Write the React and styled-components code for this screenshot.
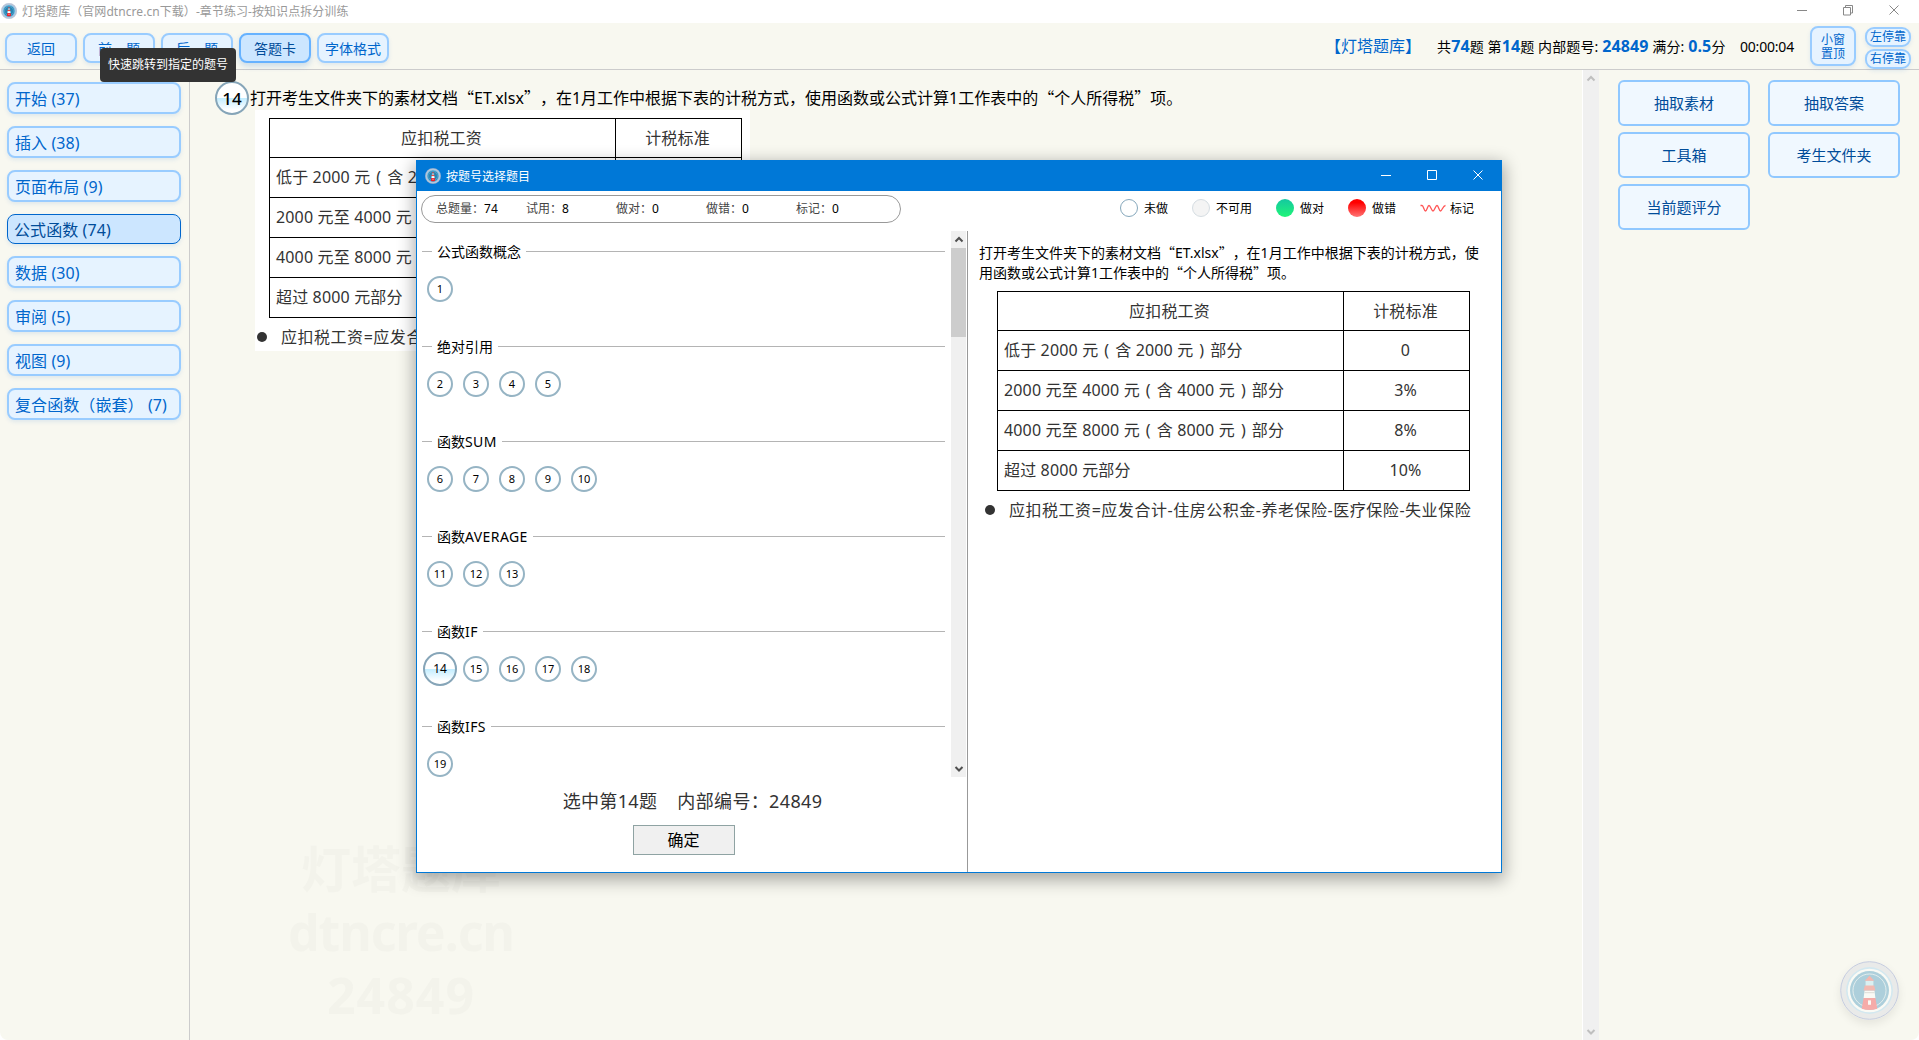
import styled, { createGlobalStyle, css } from "styled-components";

// === Data ===
const chapters = [
  { name: "开始", count: 37 },
  { name: "插入", count: 38 },
  { name: "页面布局", count: 9 },
  { name: "公式函数", count: 74, active: true },
  { name: "数据", count: 30 },
  { name: "审阅", count: 5 },
  { name: "视图", count: 9 },
  { name: "复合函数（嵌套）", count: 7 },
];

const groups = [
  { title: "公式函数概念", items: [1] },
  { title: "绝对引用", items: [2, 3, 4, 5] },
  { title: "函数", latin: "SUM", items: [6, 7, 8, 9, 10] },
  { title: "函数", latin: "AVERAGE", items: [11, 12, 13] },
  { title: "函数", latin: "IF", items: [14, 15, 16, 17, 18] },
  { title: "函数", latin: "IFS", items: [19] },
];

const stats = [
  ["总题量", 74],
  ["试用", 8],
  ["做对", 0],
  ["做错", 0],
  ["标记", 0],
];

const taxRows = [
  ["低于 2000 元 ( 含 2000 元 ) 部分", "0"],
  ["2000 元至 4000 元 ( 含 4000 元 ) 部分", "3%"],
  ["4000 元至 8000 元 ( 含 8000 元 ) 部分", "8%"],
  ["超过 8000 元部分", "10%"],
];

const actions = ["抽取素材", "抽取答案", "工具箱", "考生文件夹", "当前题评分"];

const CURRENT = 14;

// === Styled Components ===
const GlobalStyle = createGlobalStyle`
  * {
    box-sizing: border-box;
  }

  body {
    margin: 0;
    background: #fff;
    overflow: hidden;
    font-family: "Noto Sans", "Noto Sans CJK SC", sans-serif;
    font-size: 14px;
    color: #000;
    text-spacing-trim: space-all;
  }

  button {
    font-family: inherit;
    cursor: pointer;
  }
`;

const Window = styled.div`
  width: 1919px;
  height: 1040px;
  display: flex;
  flex-direction: column;
  background: #f8f8f0;
  border-radius: 0 0 8px 8px;
  overflow: hidden;
`;

const TitleBar = styled.header`
  height: 23px;
  flex: none;
  display: flex;
  align-items: center;
  padding: 0 19px 1px 1px;
  background: #fff;
  color: #999;
  font-size: 12px;
  letter-spacing: 0.06px;
`;

const TitleText = styled.span`
  flex: 1;
  margin-left: 5px;
`;

const Controls = styled.div`
  display: flex;
  gap: 34px;
  padding-bottom: 2px;
  color: ${({ $color }) => $color};
`;

const Toolbar = styled.div`
  height: 47px;
  flex: none;
  display: flex;
  align-items: center;
  justify-content: space-between;
  padding: 0 8px 0 5px;
  border-bottom: 1px solid #ccc;
`;

const ButtonRow = styled.div`
  display: flex;
  gap: 6px;
  padding-top: 4px;
`;

const blueButton = css`
  border: 2px solid #99ccff;
  background: #e6f3ff;
  color: #0066cc;
  box-shadow: 0 2px 4px rgba(0, 102, 204, 0.1);
`;

const ToolButton = styled.button`
  ${blueButton}
  width: 72px;
  height: 30px;
  padding: 2px 0 0;
  border-radius: 8px;
  font-size: 14px;
  line-height: 24px;
  ${({ $active }) =>
    $active &&
    css`
      border-color: #66b2ff;
      background: #cce6ff;
      color: #004c99;
      box-shadow: 0 3px 6px rgba(0, 102, 204, 0.2);
    `}
`;

const StatusArea = styled.div`
  display: flex;
  align-items: center;
`;

const Brand = styled.span`
  font-size: 16px;
  line-height: 24px;
  color: #0066cc;
  margin-right: 16px;
`;

const Status = styled.span`
  width: 287px;
  margin-right: 16px;
  letter-spacing: 0.12px;
  white-space: nowrap;

  b {
    font-size: 16px;
    color: #0066cc;
  }
`;

const Timer = styled.span`
  width: 70px;
  letter-spacing: -0.2px;
`;

const PinButton = styled.button`
  ${blueButton}
  width: 46px;
  height: 40px;
  padding: 1px 0 0;
  border-radius: 8px;
  font-size: 12px;
  line-height: 14px;
`;

const DockColumn = styled.div`
  display: flex;
  flex-direction: column;
  gap: 2px;
  margin: 3px 0 0 9px;
`;

const DockButton = styled.button`
  ${blueButton}
  width: 46px;
  height: 20px;
  padding: 1px 0 0;
  border-radius: 9px;
  font-size: 12px;
  line-height: 14px;
`;

const Body = styled.div`
  flex: 1;
  min-height: 0;
  display: flex;
`;

const Sidebar = styled.nav`
  width: 190px;
  flex: none;
  display: flex;
  flex-direction: column;
  gap: 12px;
  padding: 12px 8px 0 7px;
  border-right: 1px solid #ccc;
`;

const ChapterButton = styled.button`
  ${blueButton}
  width: 174px;
  height: 32px;
  flex: none;
  padding: 2px 0 0 6px;
  border-radius: 8px;
  font-size: 16px;
  line-height: 26px;
  letter-spacing: 0.08px;
  text-align: left;
  white-space: nowrap;
  ${({ $active }) =>
    $active &&
    css`
      height: 30px;
      border: 1px solid #0066cc;
      background: #cce6ff;
      color: #004c99;
    `}
`;

const Content = styled.main`
  width: 1393px;
  flex: none;
  padding: 11px 0 0 25px;
  border-right: 1px solid #fff;
`;

const QuestionLine = styled.div`
  height: 29px;
  display: flex;
  align-items: flex-start;
  gap: 1px;
  font-size: 16px;
  line-height: 35px;
  white-space: nowrap;
`;

// Curly quotes take a full em only in the CJK face
const Quote = styled.span`
  font-family: "Noto Sans CJK SC", sans-serif;
  line-height: 0;
`;

const SheetWrap = styled.div`
  margin-left: 40px;
`;

const Scrollbar = styled.div`
  width: ${({ $width }) => $width}px;
  height: ${({ $height }) => $height};
  flex: none;
  display: flex;
  flex-direction: column;
  align-items: center;
  justify-content: space-between;
  background: #f0f0f0;
`;

const ScrollThumb = styled.div`
  width: 100%;
  height: 89px;
  margin-bottom: auto;
  background: #cdcdcd;
`;

const ActionPanel = styled.aside`
  display: grid;
  grid-template-columns: 132px 132px;
  grid-auto-rows: 46px;
  gap: 6px 18px;
  padding: 10px 0 0 19px;
`;

const ActionButton = styled.button`
  padding: 0 0 2px;
  border: 2px solid #90c8ff;
  border-radius: 6px;
  background: #f0f8ff;
  color: #004c99;
  font-size: 15px;
`;

const Bubble = styled.button`
  width: ${({ $size }) => $size}px;
  height: ${({ $size }) => $size}px;
  flex: none;
  padding: 0 0 ${({ $selected }) => ($selected ? 0 : 2)}px;
  border: 2px solid #96b4c4;
  border-radius: 50%;
  background: #fff;
  color: #000;
  font-size: ${({ $font }) => $font}px;
  font-weight: ${({ $bold }) => ($bold ? 500 : 400)};
  line-height: 1;
  text-align: center;
  ${({ $selected }) =>
    $selected &&
    css`
      border-color: #86a5b8;
      background: linear-gradient(#fff 50%, #c2edff 50%, #fff 90%);
    `}
`;

const SheetBox = styled.div`
  width: 495px;
  height: 241px;
  padding: 8px 0 0 14px;
  background: #fff;
  color: #333;
  font-size: 16px;
`;

const SheetTable = styled.table`
  width: 473px;
  border-collapse: collapse;
  table-layout: fixed;

  th,
  td {
    height: 40px;
    padding: 0 0 1px 6px;
    border: 1px solid #000;
    font-weight: 400;
    line-height: 22px;
    letter-spacing: 0.15px;
    text-align: left;
    white-space: nowrap;
  }

  th {
    height: 39px;
    padding: 0 2px 1px 0;
    text-align: center;
  }

  td:last-child {
    padding: 0 2px 1px 0;
    text-align: center;
  }
`;

const Paren = styled.span`
  margin: 0 1.7px;
`;

const Note = styled.p`
  display: flex;
  align-items: center;
  gap: 14px;
  margin: 6px 0 0 -12px;
  line-height: 26px;
  letter-spacing: 0.53px;
  white-space: nowrap;

  &::before {
    content: "";
    width: 10px;
    height: 10px;
    flex: none;
    border-radius: 50%;
    background: #333;
  }
`;

const Tooltip = styled.div`
  position: absolute;
  left: 100px;
  top: 48px;
  width: 136px;
  height: 34px;
  border-radius: 4px;
  background: #333;
  color: #fff;
  font-size: 12px;
  line-height: 34px;
  text-align: center;
`;

const Watermark = styled.div`
  position: absolute;
  left: 270px;
  top: 838px;
  width: 262px;
  color: #f3f3eb;
  font-size: 50px;
  font-weight: 700;
  line-height: 63px;
  text-align: center;
  white-space: nowrap;
`;

const WatermarkLine = styled.div`
  letter-spacing: ${({ $track }) => $track}px;
`;

const FloatingLogo = styled.div`
  position: absolute;
  left: 1840px;
  top: 961px;
  width: 59px;
  height: 59px;
  border-radius: 50%;
  box-shadow: 0 4px 10px rgba(0, 0, 0, 0.08);
`;

const Dialog = styled.section`
  position: absolute;
  left: 416px;
  top: 160px;
  width: 1086px;
  height: 713px;
  display: flex;
  flex-direction: column;
  border: 1px solid #0078d7;
  background: #fff;
  box-shadow: 0 5px 16px 2px rgba(0, 0, 0, 0.33);
`;

const DialogTitle = styled.header`
  height: 30px;
  flex: none;
  display: flex;
  align-items: center;
  padding: 0 17px 1px 8px;
  background: #0078d7;
  color: #fff;
  font-size: 12px;
`;

const Summary = styled.div`
  height: 40px;
  flex: none;
  display: flex;
  justify-content: space-between;
  padding: 4px 27px 0 4px;
  font-size: 12px;
`;

const StatPill = styled.div`
  width: 480px;
  height: 28px;
  display: flex;
  padding-left: 14px;
  border: 1px solid #999;
  border-radius: 14px;
  line-height: 26px;
`;

const Stat = styled.span`
  width: 90px;
  color: #444;

  b {
    color: #000;
    font-weight: 400;
  }
`;

const Legend = styled.div`
  display: flex;
  gap: 24px;
  height: 26px;
`;

const LegendItem = styled.span`
  display: flex;
  align-items: center;
  gap: ${({ $gap = 6 }) => $gap}px;
`;

const Dot = styled.i`
  width: 18px;
  height: 18px;
  border-radius: 50%;
  border: ${({ $border }) => ($border ? `1px solid ${$border}` : "none")};
  background: ${({ $fill }) => $fill};
`;

const DialogBody = styled.div`
  flex: 1;
  min-height: 0;
  display: flex;
`;

const Picker = styled.div`
  width: 551px;
  flex: none;
  display: flex;
  flex-direction: column;
  border-right: 1px solid #999;
`;

const GroupScroll = styled.div`
  height: 546px;
  display: flex;
  padding-right: 1px;
  overflow: hidden;
`;

const GroupList = styled.div`
  flex: 1;
  padding: 10px 6px 0 5px;
`;

const Group = styled.div`
  height: 95px;
`;

const GroupTitle = styled.div`
  display: flex;
  align-items: center;
  gap: 5px;
  height: 20px;
  line-height: 20px;

  &::before,
  &::after {
    content: "";
    height: 1px;
    background: #b4b4b4;
  }

  &::before {
    width: 10px;
  }

  &::after {
    flex: 1;
  }
`;

const GroupName = styled.span`
  padding-top: 1px;
`;

const Latin = styled.span`
  letter-spacing: 0.4px;
`;

const BubbleRow = styled.div`
  display: flex;
  align-items: center;
  height: 56px;
`;

const BubbleCell = styled.div`
  width: 36px;
  display: flex;
  justify-content: center;
`;

const PickerFooter = styled.div`
  display: flex;
  flex-direction: column;
  align-items: center;
  padding: 10px 0 0 1px;
`;

const Selected = styled.div`
  display: flex;
  gap: 20px;
  color: #333;
  font-size: 18px;
  line-height: 28px;
  letter-spacing: 0.35px;
`;

const ConfirmButton = styled.button`
  width: 102px;
  height: 30px;
  margin: 10px 18px 0 0;
  padding: 0;
  border: 1px solid #8fa3a3;
  background: #f0f0f0;
  color: #000;
  font-size: 16px;
  line-height: 26px;
`;

const Preview = styled.div`
  padding: 12px 0 0 11px;
`;

const PreviewText = styled.p`
  width: 506px;
  margin: 0;
  font-size: 14px;
  line-height: 20px;
`;

const PreviewSheet = styled.div`
  margin-left: 4px;
`;

// === Icons ===
function LogoIcon({ size = 16, soft }) {
  return (
    <svg width={size} height={size} viewBox="0 0 60 60">
      <g opacity={soft ? 0.35 : 1}>
        <circle
          cx="30"
          cy="30"
          r="29.300"
          fill={soft ? "#cfd2de" : "#b9c6d8"}
          stroke={soft ? "#6478c0" : "#8fa3c8"}
          strokeWidth="1"
        />
        <circle cx="30" cy="30" r="23.800" fill="#8fcdf0" />
        <circle cx="30" cy="30" r="22.200" fill={soft ? "#fff" : "#6fb2d8"} />
        <circle cx="30" cy="30" r="19.800" fill="#2385b5" />
        <circle
          cx="30"
          cy="30"
          r="16.800"
          fill="none"
          stroke="#fff"
          strokeWidth="1"
          opacity="0.7"
        />
        <path d="M25 30h10l1 8H24z" fill="#fff" />
        <path d="M24 37.500h12l1.900 11q-7.900 2.500-15.800 0z" fill="#f02028" />
        <path d="M26 20h8v6h-8z" fill="#a8e4f4" />
        <path d="M30 15l4.800 5h-9.600z" fill="#f04038" />
        <path d="M25.200 25h9.600l1.200 5H24z" fill="#e84840" />
        <path d="M25 32.200h10" stroke="#888" strokeWidth="0.700" />
        <path d="M28.500 40h3v4.500h-3z" fill="#fff" />
      </g>
    </svg>
  );
}

function WindowIcon({ kind }) {
  const paths = {
    min: "M1 6.500h10",
    max: "M1.500 1.500h9v9h-9z",
    restore: "M1.500 3.500h7v7.500h-7zM3.500 3.500v-2h7v7.500h-2",
    close: "M1.500 1.500l9 9M10.500 1.500l-9 9",
  };

  return (
    <svg width="12" height="12" viewBox="0 0 12 12" fill="none">
      <path d={paths[kind]} stroke="currentColor" />
    </svg>
  );
}

function Chevron({ down, color = "#505050" }) {
  return (
    <svg width="16" height="17" viewBox="0 0 16 17" fill="none">
      <path
        d={down ? "M4.500 7l3.500 3.500L11.500 7" : "M4.500 10.500L8 7l3.500 3.500"}
        stroke={color}
        strokeWidth="2"
      />
    </svg>
  );
}

function WaveIcon() {
  return (
    <svg width="26" height="10" viewBox="0 0 26 10" fill="none">
      <path
        d="M0.500 2.500H2C3.500 2.500 4 8 5.500 8S7.500 2.500 9 2.500 11.500 8 13 8s2.500-5.500 4-5.500S19 8 20.500 8 23 2.500 25.500 2.500"
        stroke="#f55"
        strokeWidth="1.300"
      />
    </svg>
  );
}

// === Parts ===
function QuestionText() {
  return (
    <span>
      打开考生文件夹下的素材文档<Quote>“</Quote>ET.xlsx<Quote>”</Quote>
      ，在1月工作中根据下表的计税方式，使用函数或公式计算1工作表中的
      <Quote>“</Quote>个人所得税<Quote>”</Quote>项。
    </span>
  );
}

function TaxRange({ text }) {
  return text
    .split(/([()])/)
    .map((part, i) =>
      part === "(" || part === ")" ? <Paren key={i}>{part}</Paren> : part
    );
}

function TaxSheet() {
  return (
    <SheetBox>
      <SheetTable>
        <colgroup>
          <col width="346" />
          <col width="126" />
        </colgroup>
        <thead>
          <tr>
            <th>应扣税工资</th>
            <th>计税标准</th>
          </tr>
        </thead>
        <tbody>
          {taxRows.map(([range, rate]) => (
            <tr key={range}>
              <td>
                <TaxRange text={range} />
              </td>
              <td>{rate}</td>
            </tr>
          ))}
        </tbody>
      </SheetTable>
      <Note>应扣税工资=应发合计-住房公积金-养老保险-医疗保险-失业保险</Note>
    </SheetBox>
  );
}

function AnswerCardDialog() {
  return (
    <Dialog>
      <DialogTitle>
        <LogoIcon />
        <TitleText>按题号选择题目</TitleText>
        <Controls $color="#fff">
          <WindowIcon kind="min" />
          <WindowIcon kind="max" />
          <WindowIcon kind="close" />
        </Controls>
      </DialogTitle>

      <Summary>
        <StatPill>
          {stats.map(([label, value]) => (
            <Stat key={label}>
              {label}：<b>{value}</b>
            </Stat>
          ))}
        </StatPill>
        <Legend>
          <LegendItem>
            <Dot $fill="#fff" $border="#86a8bc" />
            未做
          </LegendItem>
          <LegendItem>
            <Dot $fill="#f4f4f4" $border="#d5dde2" />
            不可用
          </LegendItem>
          <LegendItem>
            <Dot $fill="linear-gradient(#14c8a0, #20f578)" />
            做对
          </LegendItem>
          <LegendItem>
            <Dot $fill="linear-gradient(#ff0000 20%, #ff7474)" />
            做错
          </LegendItem>
          <LegendItem $gap={4}>
            <WaveIcon />
            标记
          </LegendItem>
        </Legend>
      </Summary>

      <DialogBody>
        <Picker>
          <GroupScroll>
            <GroupList>
              {groups.map(({ title, latin, items }) => (
                <Group key={items[0]}>
                  <GroupTitle>
                    <GroupName>
                      {title}
                      {latin && <Latin>{latin}</Latin>}
                    </GroupName>
                  </GroupTitle>
                  <BubbleRow>
                    {items.map((n) => (
                      <BubbleCell key={n}>
                        <Bubble
                          $size={n === CURRENT ? 34 : 26}
                          $font={n === CURRENT ? 12 : 11}
                          $selected={n === CURRENT}
                        >
                          {n}
                        </Bubble>
                      </BubbleCell>
                    ))}
                  </BubbleRow>
                </Group>
              ))}
            </GroupList>
            <Scrollbar $width={15} $height="546px">
              <Chevron />
              <ScrollThumb />
              <Chevron down />
            </Scrollbar>
          </GroupScroll>
          <PickerFooter>
            <Selected>
              <span>选中第{CURRENT}题</span>
              <span>内部编号：24849</span>
            </Selected>
            <ConfirmButton>确定</ConfirmButton>
          </PickerFooter>
        </Picker>

        <Preview>
          <PreviewText>
            <QuestionText />
          </PreviewText>
          <PreviewSheet>
            <TaxSheet />
          </PreviewSheet>
        </Preview>
      </DialogBody>
    </Dialog>
  );
}

// === Main Component ===
export default function App() {
  return (
    <>
      <GlobalStyle />
      <Window>
        <TitleBar>
          <LogoIcon />
          <TitleText>
            灯塔题库（官网dtncre.cn下载）-章节练习-按知识点拆分训练
          </TitleText>
          <Controls $color="#888">
            <WindowIcon kind="min" />
            <WindowIcon kind="restore" />
            <WindowIcon kind="close" />
          </Controls>
        </TitleBar>

        <Toolbar>
          <ButtonRow>
            <ToolButton>返回</ToolButton>
            <ToolButton>前一题</ToolButton>
            <ToolButton>后一题</ToolButton>
            <ToolButton $active>答题卡</ToolButton>
            <ToolButton>字体格式</ToolButton>
          </ButtonRow>
          <StatusArea>
            <Brand>【灯塔题库】</Brand>
            <Status>
              共<b>74</b>题 第<b>14</b>题 内部题号: <b>24849</b> 满分: <b>0.5</b>分
            </Status>
            <Timer>00:00:04</Timer>
            <PinButton>
              小窗
              <br />
              置顶
            </PinButton>
            <DockColumn>
              <DockButton>左停靠</DockButton>
              <DockButton>右停靠</DockButton>
            </DockColumn>
          </StatusArea>
        </Toolbar>

        <Body>
          <Sidebar>
            {chapters.map(({ name, count, active }) => (
              <ChapterButton key={name} $active={active}>
                {name} ({count})
              </ChapterButton>
            ))}
          </Sidebar>
          <Content>
            <QuestionLine>
              <Bubble $size={34} $font={17} $selected $bold>
                14
              </Bubble>
              <QuestionText />
            </QuestionLine>
            <SheetWrap>
              <TaxSheet />
            </SheetWrap>
          </Content>
          <Scrollbar $width={16} $height="100%">
            <Chevron color="#bfbfbf" />
            <Chevron down color="#bfbfbf" />
          </Scrollbar>
          <ActionPanel>
            {actions.map((label) => (
              <ActionButton key={label}>{label}</ActionButton>
            ))}
          </ActionPanel>
        </Body>
      </Window>

      <Watermark>
        <WatermarkLine $track={0}>灯塔题库</WatermarkLine>
        <WatermarkLine $track={-1}>dtncre.cn</WatermarkLine>
        <WatermarkLine $track={1}>24849</WatermarkLine>
      </Watermark>
      <FloatingLogo>
        <LogoIcon size={59} soft />
      </FloatingLogo>
      <Tooltip>快速跳转到指定的题号</Tooltip>
      <AnswerCardDialog />
    </>
  );
}
